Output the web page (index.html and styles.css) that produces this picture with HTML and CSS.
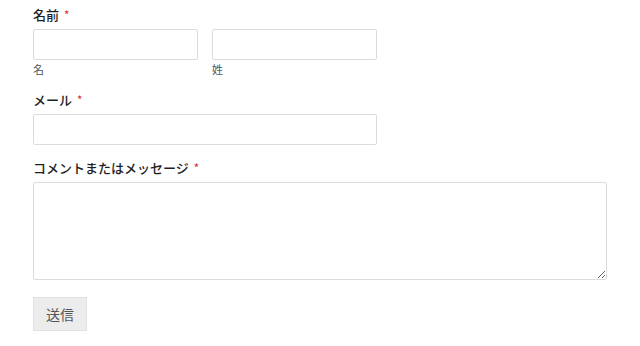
FILE: index.html
```html
<!DOCTYPE html>
<html lang="ja">
<head>
<meta charset="utf-8">
<link rel="stylesheet" href="styles.css">
</head>
<body>
<form class="form">
  <div class="field">
    <div class="label">名前<span class="req">*</span></div>
    <div class="name-row">
      <div class="name-part">
        <input class="input input-half" type="text">
        <div class="sublabel">名</div>
      </div>
      <div class="name-part">
        <input class="input input-half" type="text">
        <div class="sublabel">姓</div>
      </div>
    </div>
  </div>
  <div class="field field-email">
    <div class="label">メール<span class="req">*</span></div>
    <input class="input input-email" type="email">
  </div>
  <div class="field field-comment">
    <div class="label">コメントまたはメッセージ<span class="req">*</span></div>
    <textarea class="textarea"></textarea>
  </div>
  <button class="submit" type="button">送信</button>
</form>
</body>
</html>
```
FILE: styles.css
```css
html, body {
  margin: 0;
  padding: 0;
  background: #fff;
}
body {
  font-family: "Noto Sans CJK JP", "Noto Sans", sans-serif;
  color: #222;
}
.form {
  padding: 5px 0 0 33px;
}
.field {
  display: flex;
  flex-direction: column;
}
.label {
  font-size: 13px;
  line-height: 20px;
  font-weight: 500;
  color: #1e1e1e;
  margin-bottom: 4px;
}
.req {
  color: #d63638;
  font-size: 11px;
  margin-left: 5px;
  position: relative;
  top: -1px;
}
.name-row {
  display: flex;
  gap: 14px;
}
.name-part {
  display: flex;
  flex-direction: column;
}
.input {
  box-sizing: border-box;
  height: 31px;
  border: 1px solid #dcdcdc;
  border-radius: 2px;
  background: #fff;
  margin: 0;
  padding: 0 8px;
}
.input-half {
  width: 165px;
}
.input-email {
  width: 344px;
}
.sublabel {
  font-size: 11px;
  line-height: 15px;
  color: #555;
  margin-top: 2px;
}
.field-email {
  margin-top: 13px;
}
.field-comment {
  margin-top: 13px;
}
.textarea {
  box-sizing: border-box;
  width: 574px;
  height: 98px;
  border: 1px solid #dcdcdc;
  border-radius: 2px;
  margin: 0;
  resize: both;
  font-family: inherit;
}
.submit {
  margin-top: 17px;
  box-sizing: border-box;
  height: 34px;
  width: 54px;
  padding: 0;
  border: 1px solid #e2e2e2;
  border-radius: 0;
  background: #ececec;
  color: #555;
  font-family: "Noto Sans CJK JP", sans-serif;
  font-size: 14px;
}
```
